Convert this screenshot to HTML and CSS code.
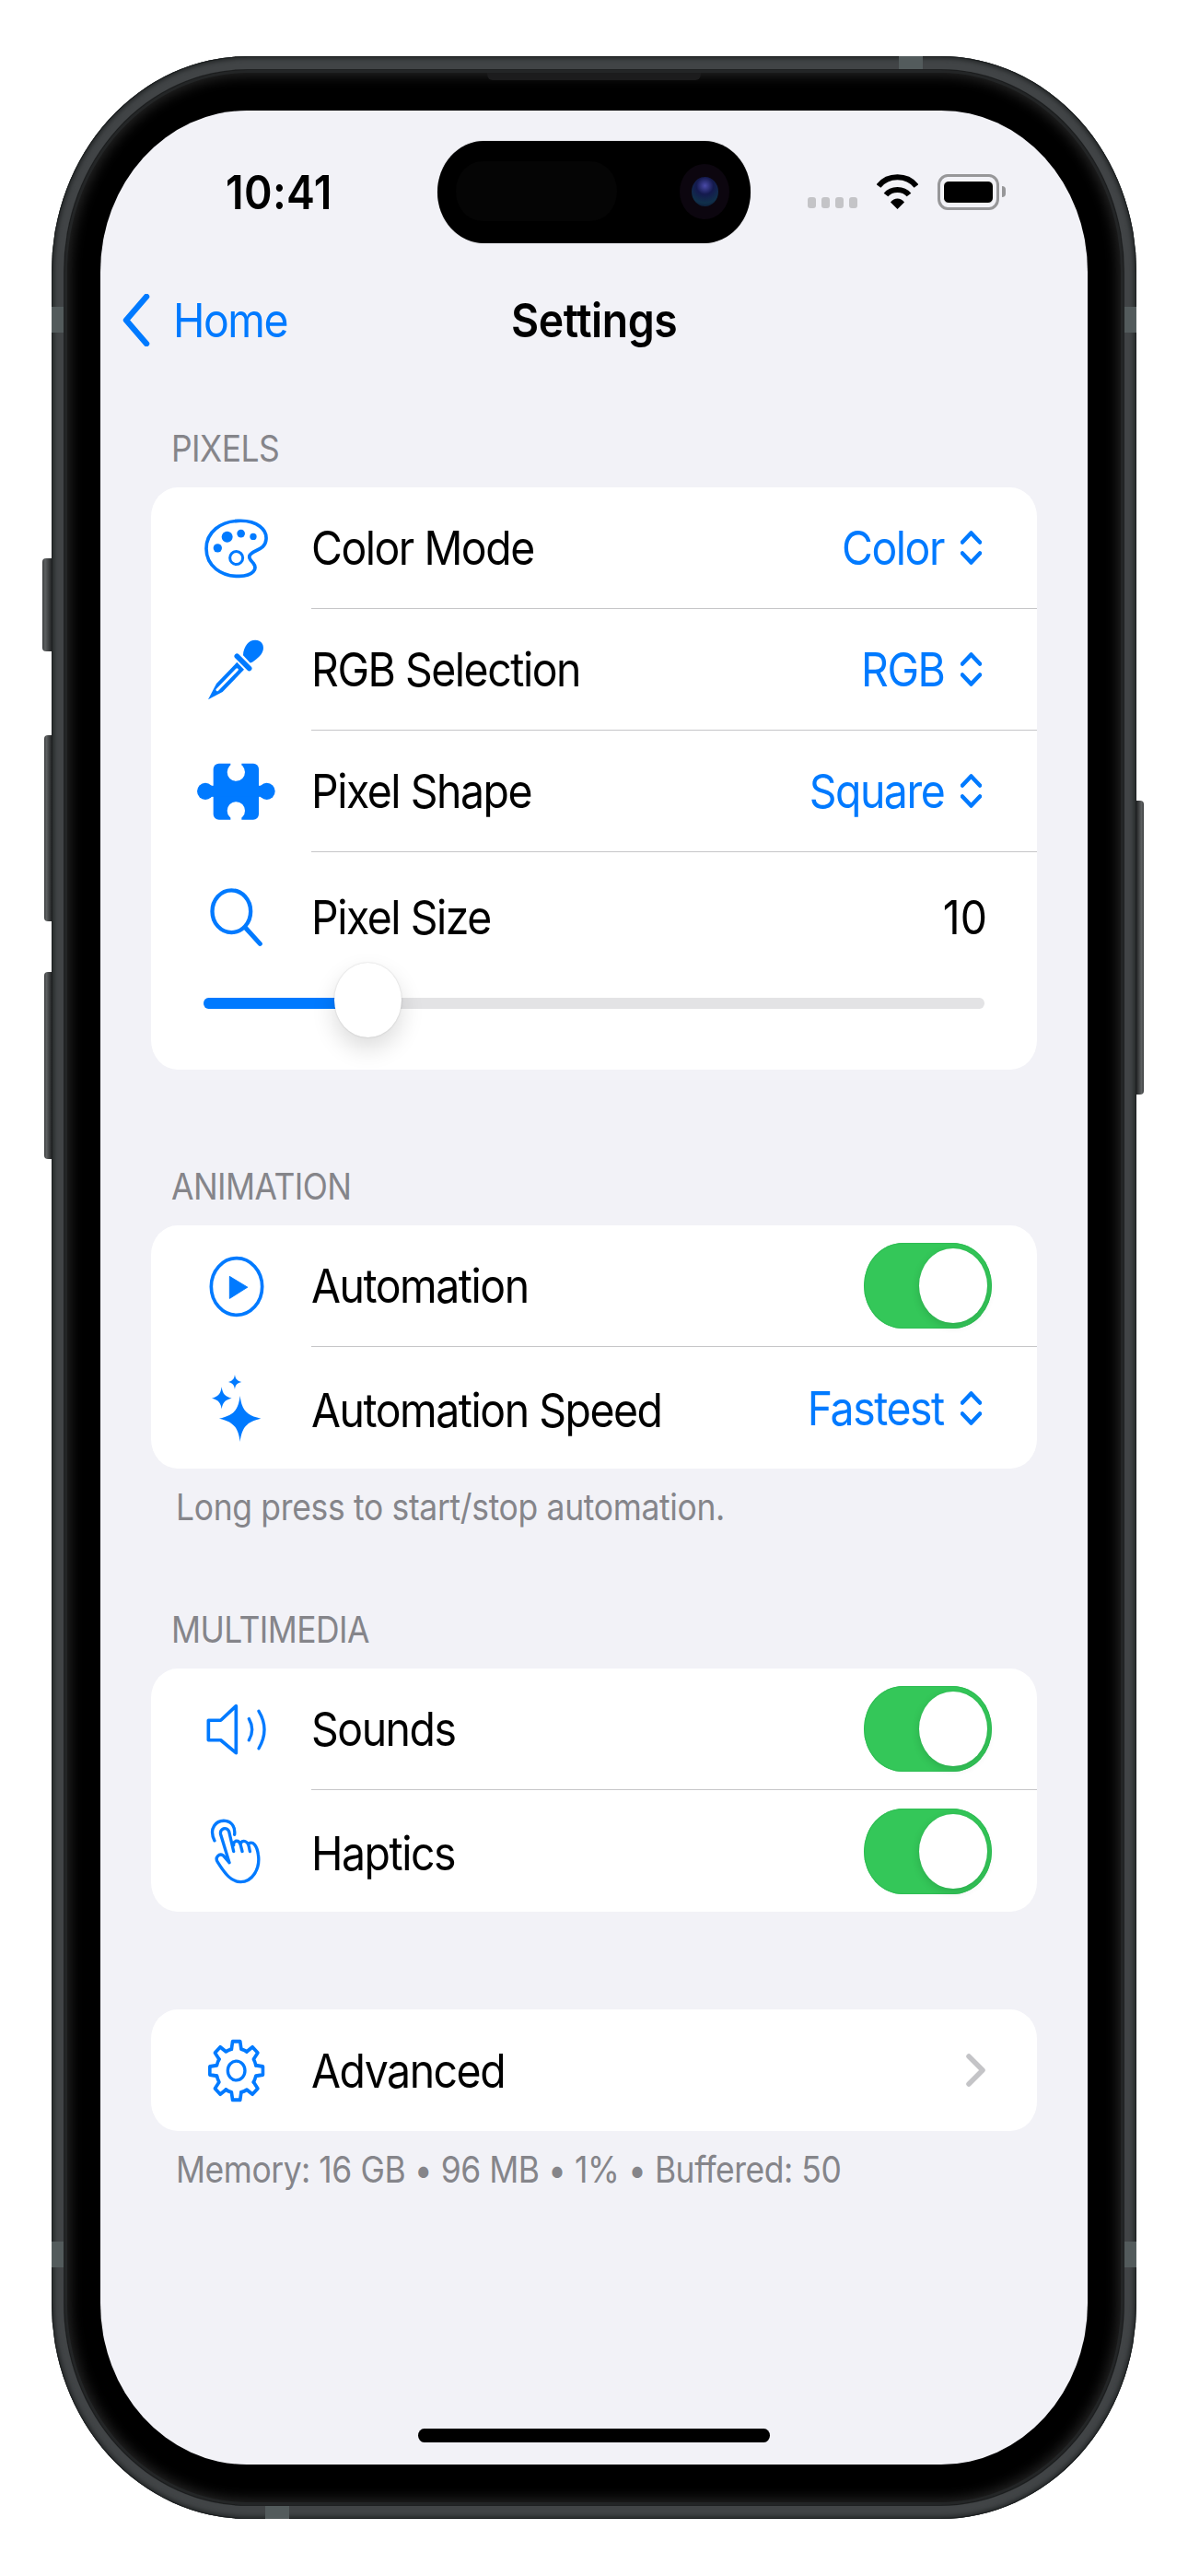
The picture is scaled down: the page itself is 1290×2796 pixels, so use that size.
FILE: index.html
```html
<!DOCTYPE html>
<html lang="en">
<head>
    <meta charset="UTF-8">
    <meta name="viewport" content="width=device-width, initial-scale=1.0">
    <title>Settings</title>
    <link rel="stylesheet" href="styles.css">
</head>
<body>
<div class="phone">
    <span class="side-btn btn-action"></span>
    <span class="side-btn btn-vol-up"></span>
    <span class="side-btn btn-vol-down"></span>
    <span class="side-btn btn-power"></span>
    <span class="band band-top"></span>
    <span class="band band-bottom"></span>
    <span class="band band-left-a"></span>
    <span class="band band-left-b"></span>
    <span class="band band-right-a"></span>
    <span class="band band-right-b"></span>

    <div class="bezel">
        <span class="earpiece"></span>
        <div class="screen">
            <!-- Dynamic island -->
            <div class="island">
                <span class="island-sensor"></span>
                <span class="island-cam"><span class="island-lens"></span></span>
            </div>

            <div class="status">
                <span class="time">10:41</span>
                <div class="status-icons">
                    <div class="signal"><i></i><i></i><i></i><i></i></div>
                    <svg class="wifi" viewBox="0 0 45 38">
                        <path d="M2 13C12 0 33 0 43 13M10 22.500C16 15 29 15 35 22.500" fill="none" stroke="#000" stroke-width="6"/>
                        <path d="M15 30.500C19 25 26 25 30 30.500L22.500 38Z"/>
                    </svg>
                    <div class="battery"><span class="battery-level"></span></div>
                    <span class="battery-nub"></span>
                </div>
            </div>

            <div class="nav">
                <div class="nav-back">
                    <svg class="nav-chevron" viewBox="0 0 31 57"><polyline points="27,3 5,28.500 27,54" fill="none" stroke="#007aff" stroke-width="6.500" stroke-linecap="round" stroke-linejoin="round"/></svg>
                    <span class="nav-back-text">Home</span>
                </div>
                <div class="nav-title">Settings</div>
            </div>

            <!-- Pixels -->
            <div class="section section-first">
                <div class="section-head">PIXELS</div>
                <div class="card">
                    <div class="row">
                        <div class="row-icon">
                            <svg class="ic ic-palette" viewBox="240 125 220 200" preserveAspectRatio="none">
                                <path d="M355 135C420 132 450 165 447 195C445 225 415 228 400 240C385 250 395 262 405 272C420 290 405 313 360 314C300 316 252 280 252 225C252 170 300 137 355 135Z" fill="none" stroke="#007aff" stroke-width="11"/>
                                <circle cx="320" cy="187" r="18" fill="#007aff"/>
                                <circle cx="365" cy="176" r="13" fill="#007aff"/>
                                <circle cx="405" cy="186" r="11" fill="#007aff"/>
                                <circle cx="289" cy="223" r="14" fill="#007aff"/>
                                <circle cx="350" cy="255" r="21" fill="none" stroke="#007aff" stroke-width="9"/>
                            </svg>
                        </div>
                        <div class="row-body">
                            <span class="label">Color Mode</span>
                            <div class="picker"><span class="picker-text">Color</span><svg class="updown" viewBox="0 0 23 37"><path d="M2 12.500L11.500 2.500L21 12.500M2 24.500L11.500 34.500L21 24.500" fill="none" stroke="#007aff" stroke-width="4.500" stroke-linecap="round" stroke-linejoin="round"/></svg></div>
                        </div>
                    </div>
                    <div class="row">
                        <div class="row-icon">
                            <svg class="ic ic-dropper" viewBox="255 520 190 205" preserveAspectRatio="none">
                                <path d="M372 575C372 560 378 548 385 538C397 522 425 520 435 538C442 552 437 570 420 583C412 590 405 597 395 600Z" fill="#007aff"/>
                                <path d="M352 578L392 618" stroke="#007aff" stroke-width="17" stroke-linecap="round"/>
                                <path d="M352 598L285 668L258 720L305 695L375 622Z" fill="#007aff"/>
                                <path d="M352 622L288 688" stroke="#fff" stroke-width="9" stroke-linecap="round"/>
                            </svg>
                        </div>
                        <div class="row-body">
                            <span class="label">RGB Selection</span>
                            <div class="picker"><span class="picker-text">RGB</span><svg class="updown" viewBox="0 0 23 37"><path d="M2 12.500L11.500 2.500L21 12.500M2 24.500L11.500 34.500L21 24.500" fill="none" stroke="#007aff" stroke-width="4.500" stroke-linecap="round" stroke-linejoin="round"/></svg></div>
                        </div>
                    </div>
                    <div class="row">
                        <div class="row-icon">
                            <svg class="ic ic-puzzle" viewBox="220 925 260 188" preserveAspectRatio="none">
                                <rect x="276" y="927" width="148" height="182" rx="18" fill="#007aff"/>
                                <circle cx="250" cy="1017" r="27" fill="#007aff"/>
                                <circle cx="450" cy="1017" r="27" fill="#007aff"/>
                                <rect x="262" y="999" width="176" height="36" fill="#007aff"/>
                                <circle cx="350" cy="955" r="29" fill="#fff"/>
                                <rect x="332" y="920" width="36" height="24" fill="#fff"/>
                                <circle cx="350" cy="1080" r="29" fill="#fff"/>
                                <rect x="332" y="1092" width="36" height="24" fill="#fff"/>
                            </svg>
                        </div>
                        <div class="row-body">
                            <span class="label">Pixel Shape</span>
                            <div class="picker"><span class="picker-text">Square</span><svg class="updown" viewBox="0 0 23 37"><path d="M2 12.500L11.500 2.500L21 12.500M2 24.500L11.500 34.500L21 24.500" fill="none" stroke="#007aff" stroke-width="4.500" stroke-linecap="round" stroke-linejoin="round"/></svg></div>
                        </div>
                    </div>
                    <div class="row-slider">
                        <div class="row row-size">
                            <div class="row-icon">
                                <svg class="ic ic-search" viewBox="260 128 180 196" preserveAspectRatio="none">
                                    <ellipse cx="333" cy="207" rx="62.500" ry="69" fill="none" stroke="#007aff" stroke-width="13"/>
                                    <path d="M378 260L426 313" stroke="#007aff" stroke-width="15" stroke-linecap="round"/>
                                </svg>
                            </div>
                            <div class="row-body row-body-plain">
                                <span class="label">Pixel Size</span>
                                <span class="num">10</span>
                            </div>
                        </div>
                        <div class="slider">
                            <span class="slider-fill"></span>
                            <span class="slider-thumb"></span>
                        </div>
                    </div>
                </div>
            </div>

            <!-- Animation -->
            <div class="section">
                <div class="section-head">ANIMATION</div>
                <div class="card">
                    <div class="row">
                        <div class="row-icon">
                            <svg class="ic ic-play" viewBox="140 185 180 200" preserveAspectRatio="none">
                                <ellipse cx="230" cy="285" rx="83" ry="92" fill="none" stroke="#007aff" stroke-width="11"/>
                                <path d="M207 252L265 287L207 323Z" fill="#007aff" stroke="#007aff" stroke-width="3" stroke-linejoin="round"/>
                            </svg>
                        </div>
                        <div class="row-body">
                            <span class="label">Automation</span>
                            <div class="toggle"><span class="toggle-thumb"></span></div>
                        </div>
                    </div>
                    <div class="row">
                        <div class="row-icon">
                            <svg class="ic ic-sparkles" viewBox="145 570 166 225" preserveAspectRatio="none">
                                <path d="M240 642C246 690 262 706 308 716C262 726 246 745 240 792C234 745 218 726 172 716C218 706 234 690 240 642Z" fill="#007aff"/>
                                <path d="M180 613C183 637 192 645 213 650C192 655 183 663 180 685C177 663 168 655 148 650C168 645 177 637 180 613Z" fill="#007aff"/>
                                <path d="M223 573C225 588 231 593 245 597C231 601 225 606 223 621C221 606 215 601 202 597C215 593 221 588 223 573Z" fill="#007aff"/>
                            </svg>
                        </div>
                        <div class="row-body">
                            <span class="label label-low">Automation Speed</span>
                            <div class="picker"><span class="picker-text">Fastest</span><svg class="updown" viewBox="0 0 23 37"><path d="M2 12.500L11.500 2.500L21 12.500M2 24.500L11.500 34.500L21 24.500" fill="none" stroke="#007aff" stroke-width="4.500" stroke-linecap="round" stroke-linejoin="round"/></svg></div>
                        </div>
                    </div>
                </div>
                <div class="section-foot">Long press to start/stop automation.</div>
            </div>

            <!-- Multimedia -->
            <div class="section section-after-foot">
                <div class="section-head">MULTIMEDIA</div>
                <div class="card">
                    <div class="row">
                        <div class="row-icon">
                            <svg class="ic ic-speaker" viewBox="130 85 200 172" preserveAspectRatio="none">
                                <path d="M140 140L180 140L230 93L230 247L180 205L140 205Z" fill="none" stroke="#007aff" stroke-width="11" stroke-linejoin="round"/>
                                <path d="M272 135Q292 170 272 205M304 110Q340 170 304 232" fill="none" stroke="#007aff" stroke-width="10" stroke-linecap="round"/>
                            </svg>
                        </div>
                        <div class="row-body">
                            <span class="label">Sounds</span>
                            <div class="toggle"><span class="toggle-thumb"></span></div>
                        </div>
                    </div>
                    <div class="row">
                        <div class="row-icon">
                            <svg class="ic ic-hand" viewBox="145 455 170 220" preserveAspectRatio="none">
                                <path d="M160 530C140 490 165 462 195 465C215 467 228 485 225 510" fill="none" stroke="#007aff" stroke-width="10" stroke-linecap="round"/>
                                <path d="M208 602L180 510C175 490 200 482 207 500L222 565M222 545C220 528 240 525 245 545L250 565M245 540C248 525 268 530 272 550L275 565M270 540C285 530 298 545 302 575C310 625 280 665 245 665C215 665 195 640 170 600C160 585 175 570 188 578L208 602" fill="none" stroke="#007aff" stroke-width="10" stroke-linecap="round" stroke-linejoin="round"/>
                            </svg>
                        </div>
                        <div class="row-body">
                            <span class="label label-low">Haptics</span>
                            <div class="toggle"><span class="toggle-thumb"></span></div>
                        </div>
                    </div>
                </div>
            </div>

            <!-- Advanced -->
            <div class="section section-last">
                <div class="card">
                    <div class="row">
                        <div class="row-icon">
                            <svg class="ic ic-gear" viewBox="135 128 190 206" preserveAspectRatio="none">
                                <defs><path id="gear-tooth" d="M-17.400 -69.900L-13.400 -95L13.400 -95L17.400 -69.900A72 72 0 0 1 37.100 -61.700" fill="none" stroke="#007aff" stroke-width="12" stroke-linecap="round" stroke-linejoin="round"/></defs>
                                <g transform="translate(230 231) scale(.91 1)">
                                    <use href="#gear-tooth"/>
                                    <use href="#gear-tooth" transform="rotate(45)"/>
                                    <use href="#gear-tooth" transform="rotate(90)"/>
                                    <use href="#gear-tooth" transform="rotate(135)"/>
                                    <use href="#gear-tooth" transform="rotate(180)"/>
                                    <use href="#gear-tooth" transform="rotate(225)"/>
                                    <use href="#gear-tooth" transform="rotate(270)"/>
                                    <use href="#gear-tooth" transform="rotate(315)"/>
                                </g>
                                <ellipse cx="230" cy="231" rx="28" ry="31" fill="none" stroke="#007aff" stroke-width="10"/>
                            </svg>
                        </div>
                        <div class="row-body">
                            <span class="label">Advanced</span>
                            <svg class="disclosure" viewBox="0 0 23 38"><polyline points="4,4 19,19 4,34" fill="none" stroke="#c4c4c7" stroke-width="5.500" stroke-linecap="round" stroke-linejoin="round"/></svg>
                        </div>
                    </div>
                </div>
                <div class="section-foot section-foot-tight">Memory: 16 GB • 96 MB • 1% • Buffered: 50</div>
            </div>

            <span class="home-bar"></span>
        </div>
    </div>
</div>
</body>
</html>
```

FILE: styles.css
```css
/* the mockup in the reference is squeezed horizontally by about 9%: circles
   are drawn as ellipses and every text is narrowed with scaleX */
html, body {
    margin: 0;
    background: #fff;
}

body {
    height: 2796px;
    padding: 61px 0 0 56px;
    box-sizing: border-box;
    font-family: Inter, "Liberation Sans", sans-serif;
    color: #000;
}

/* device frame */
.phone {
    position: relative;
    width: 1178px;
    height: 2673px;
    padding: 15px 14px;
    box-sizing: border-box;
    border-radius: 213px / 234px;
    background: #414446;
    box-shadow: inset 0 0 0 1px #1d2021, inset 0 0 4px 3px #26292a;
}

.bezel {
    position: relative;
    height: 100%;
    padding: 44px 39px;
    box-sizing: border-box;
    border-radius: 199px / 219px;
    background: #000;
    box-shadow: 0 0 0 1px #1f2122, inset 0 0 0 3px #232526, inset 0 0 14px 6px #262626;
}

.earpiece {
    position: absolute;
    top: 3px;
    left: 50%;
    width: 232px;
    height: 8px;
    margin-left: -116px;
    border-radius: 0 0 6px 6px;
    background: #1c1c1d;
}

.side-btn {
    position: absolute;
    border-radius: 4px 0 0 4px;
    background: linear-gradient(90deg, #3a3c3d, #5d6061 30%, #232526);
}

.btn-action { left: -10px; top: 545px; height: 101px; width: 10px; }
.btn-vol-up { left: -8px; top: 737px; height: 202px; width: 8px; }
.btn-vol-down { left: -8px; top: 994px; height: 203px; width: 8px; }
.btn-power {
    right: -8px;
    top: 808px;
    height: 319px;
    width: 8px;
    border-radius: 0 4px 4px 0;
    background: linear-gradient(270deg, #3a3c3d, #5d6061 30%, #232526);
}

.band {
    position: absolute;
    background: #535b5c;
}

.band-top { top: 0; left: 920px; width: 26px; height: 15px; }
.band-bottom { bottom: 0; left: 232px; width: 26px; height: 15px; }
.band-left-a { left: 0; top: 272px; width: 14px; height: 28px; }
.band-left-b { left: 0; top: 2372px; width: 14px; height: 28px; }
.band-right-a { right: 0; top: 272px; width: 14px; height: 28px; }
.band-right-b { right: 0; top: 2372px; width: 14px; height: 28px; }

.screen {
    position: relative;
    height: 100%;
    padding: 0 55px;
    box-sizing: border-box;
    border-radius: 159px / 175px;
    background: #f2f2f7;
    overflow: hidden;
}

/* dynamic island */
.island {
    position: absolute;
    top: 33px;
    left: 50%;
    width: 340px;
    height: 111px;
    margin-left: -170px;
    border-radius: 51px / 56px;
    background: #000;
    box-shadow: 0 0 1px #888;
}

.island-sensor {
    position: absolute;
    left: 20px;
    top: 22px;
    width: 175px;
    height: 65px;
    border-radius: 29px / 32px;
    background: #050505;
}

.island-cam {
    position: absolute;
    left: 263px;
    top: 25px;
    width: 54px;
    height: 60px;
    border-radius: 50%;
    background: #0c060f;
    display: flex;
    align-items: center;
    justify-content: center;
}

.island-lens {
    width: 29px;
    height: 32px;
    border-radius: 50%;
    background: radial-gradient(circle at 50% 30%, #4a4aa8 0, #141a4e 35%, #10304a 70%, #0b0f2c 100%);
}

/* status bar */
.status {
    height: 176px;
    display: flex;
    align-items: center;
    justify-content: space-between;
    margin: 0 -55px;
    padding: 0 89px 0 136px;
}

.time {
    font-size: 51px;
    font-weight: 600;
    letter-spacing: .4px;
    transform: scaleX(.909);
    transform-origin: left center;
}

.status-icons {
    display: flex;
    align-items: center;
}

.signal {
    display: flex;
    gap: 6px;
    margin-top: 21px;
    margin-right: 21px;
    height: 15px;
    align-items: flex-end;
}

.signal i {
    width: 9px;
    height: 12px;
    border-radius: 3px;
    background: #c4c4c7;
}

.wifi {
    width: 45px;
    height: 38px;
    margin-right: 21px;
}

.battery {
    width: 67px;
    height: 39px;
    padding: 4px 3px;
    box-sizing: border-box;
    border: 3px solid #979799;
    border-radius: 11px / 12px;
}

.battery-level {
    display: block;
    height: 100%;
    border-radius: 6px;
    background: #000;
    border: 1px solid #fff;
    box-sizing: border-box;
}

.battery-nub {
    width: 4px;
    height: 12px;
    margin-left: 3px;
    border-radius: 0 4px 4px 0;
    background: #979799;
}

/* nav bar */
.nav {
    position: relative;
    height: 102px;
    margin: 0 -55px;
    display: flex;
    align-items: center;
    justify-content: center;
}

.nav-back {
    position: absolute;
    left: 23px;
    top: 0;
    height: 100%;
    display: flex;
    align-items: center;
    gap: 25px;
    font-size: 51px;
    color: #007aff;
}

.nav-back-text {
    letter-spacing: -1.600px;
    transform: scaleX(.909);
    transform-origin: left center;
}

.nav-chevron {
    width: 31px;
    height: 57px;
}

.nav-title {
    font-size: 51px;
    font-weight: 600;
    letter-spacing: -.5px;
    transform: scaleX(.909);
}

/* sections */
.section { margin-top: 104px; }
.section-first { margin-top: 66px; }
.section-after-foot { margin-top: 87px; }
.section-last { margin-top: 106px; }

.section-head {
    height: 46px;
    line-height: 46px;
    margin: 0 0 19px 22px;
    font-size: 39px;
    letter-spacing: -.6px;
    color: #85858a;
    transform: scaleX(.909);
    transform-origin: left center;
}

.section-foot {
    height: 46px;
    line-height: 46px;
    margin: 19px 0 0 27px;
    font-size: 39px;
    letter-spacing: -.35px;
    color: #85858a;
    transform: scaleX(.909);
    transform-origin: left center;
}

.section-foot-tight { letter-spacing: -.5px; }

.card {
    background: #fff;
    border-radius: 29px / 32px;
}

.row {
    display: flex;
    height: 132px;
}

.row-icon {
    width: 125px;
    margin-left: 30px;
    margin-right: 19px;
    flex: none;
    display: flex;
    align-items: center;
    justify-content: center;
}

.row-body {
    flex: 1;
    display: flex;
    align-items: center;
    justify-content: space-between;
    padding-right: 58px;
    border-bottom: 1px solid #c6c6c8;
}

.row:last-child .row-body,
.row-size .row-body { border-bottom: 0; }

.row-body-plain { padding-right: 54px; }

.label {
    font-size: 51px;
    letter-spacing: -1.600px;
    transform: scaleX(.909);
    transform-origin: left center;
}

.label-low { position: relative; top: 2px; }

.picker {
    display: flex;
    align-items: center;
    gap: 18px;
    font-size: 51px;
    color: #007aff;
}

.picker-text {
    letter-spacing: -1.600px;
    transform: scaleX(.909);
    transform-origin: right center;
}

.num {
    font-size: 51px;
    transform: scaleX(.909);
    transform-origin: right center;
}

.updown {
    width: 23px;
    height: 37px;
    margin-right: 2px;
}

.disclosure {
    width: 23px;
    height: 38px;
    margin-right: -3px;
}

.ic { display: block; }
.ic-palette { width: 73.300px; height: 67px; }
.ic-dropper { width: 63.300px; height: 68px; }
.ic-puzzle { width: 86.700px; height: 63px; }
.ic-search { width: 60px; height: 65px; }
.ic-play { width: 60px; height: 67px; }
.ic-sparkles { width: 55.300px; height: 75px; }
.ic-speaker { width: 66.700px; height: 57px; }
.ic-hand { width: 56.700px; height: 73px; }
.ic-gear { width: 63.300px; height: 69px; }

/* pixel size slider */
.row-slider { height: 236px; }

.row-size { height: 140px; }

.slider {
    position: relative;
    height: 12px;
    margin: 18px 57px 0;
    border-radius: 5.500px / 6px;
    background: #e3e3e5;
}

.slider-fill {
    display: block;
    width: 178px;
    height: 100%;
    border-radius: 5.500px 0 0 5.500px / 6px 0 0 6px;
    background: #007aff;
}

.slider-thumb {
    position: absolute;
    left: 142px;
    top: -38px;
    width: 73px;
    height: 81px;
    border-radius: 50%;
    background: #fff;
    box-shadow: 0 0 2px rgba(0, 0, 0, .18), 0 12px 26px rgba(0, 0, 0, .14);
}

/* switches */
.toggle {
    position: relative;
    width: 139px;
    height: 93px;
    margin-right: -9px;
    border-radius: 43px / 47px;
    background: #34c759;
    box-shadow: inset 0 0 0 1px #2fbd54;
}

.toggle-thumb {
    position: absolute;
    right: 5px;
    top: 6px;
    width: 74px;
    height: 81px;
    border-radius: 50%;
    background: #fff;
    box-shadow: 0 3px 10px rgba(0, 0, 0, .14);
}

.home-bar {
    position: absolute;
    left: 50%;
    bottom: 24px;
    width: 382px;
    height: 15px;
    margin-left: -191px;
    border-radius: 7px / 8px;
    background: #000;
}
```
